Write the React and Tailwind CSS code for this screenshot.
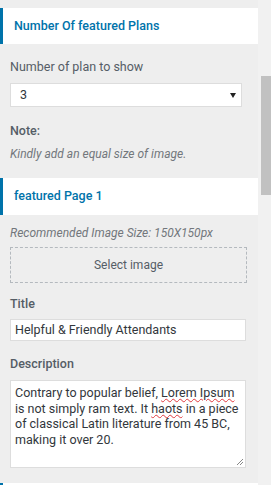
export default function App() {
  // spell-check style underline for flagged words
  const typo = "underline decoration-wavy decoration-[#e0393e] decoration-1 underline-offset-1";

  return (
    <div className="flex h-[485px] w-[271px] overflow-hidden bg-[#eeeeee] font-['Roboto','Liberation_Sans',sans-serif]">
      <div className="flex w-[258px] shrink-0 flex-col pt-2">
        {/* Section header */}
        <div className="flex h-[36px] shrink-0 items-center border-l-[3px] border-[#0073aa] bg-white pl-[11px] text-[12.5px] font-medium text-[#0073aa]">
          Number Of featured Plans
        </div>

        <div className="flex flex-col px-[10px]">
          <div className="mt-[14px] text-[12.5px] leading-[18px] text-[#555d66]">Number of plan to show</div>
          <div className="mt-[7px] flex h-[24px] w-[232px] items-center justify-between border border-[#dddddd] bg-white pl-[9px] pr-[5px] text-[12.5px] text-[#32373c]">
            <span>3</span>
            <svg width="6" height="5" viewBox="0 0 6 5">
              <path d="M0 0 H6 L3 5 Z" fill="#222" />
            </svg>
          </div>

          <div className="mt-[15px] text-[12.5px] font-medium leading-[18px] text-[#555d66]">Note:</div>
          <div className="mt-[6px] text-[12px] italic leading-[16px] text-[#72777c]">Kindly add an equal size of image.</div>
        </div>

        <div className="mt-[16px] flex h-[37px] shrink-0 items-center border-l-[3px] border-[#0073aa] bg-white pl-[11px] text-[12.5px] font-medium text-[#0073aa]">
          featured Page 1
        </div>

        <div className="flex flex-col px-[10px]">
          <div className="mt-[10px] text-[12px] italic leading-[16px] text-[#72777c]">Recommended Image Size: 150X150px</div>
          <div className="mt-[6px] flex h-[36px] w-[237px] items-center justify-center border border-dashed border-[#b4b9be] text-[12px] text-[#555d66]">
            Select image
          </div>

          <div className="mt-[12px] text-[12.5px] font-medium leading-[18px] text-[#555d66]">Title</div>
          <div className="mt-[6px] flex h-[22px] w-[236px] items-center border border-[#dddddd] bg-white pl-[4px] text-[12.5px] text-[#32373c]">
            Helpful &amp; Friendly Attendants
          </div>

          <div className="mt-[14px] text-[12.5px] font-medium leading-[18px] text-[#555d66]">Description</div>
          <div className="relative mt-[7px] h-[88px] w-[236px] shrink-0 border border-[#dddddd] bg-white pl-[4px] pr-[6px] pt-[4px] text-[12.5px] leading-[15.5px] text-[#32373c]">
            Contrary to popular belief, <span className={typo}>Lorem Ipsum</span> is not simply ram text. It{" "}
            <span className={typo}>haots</span> in a piece of classical Latin literature from 45 BC, making it over 20.
            <svg className="absolute bottom-[2px] right-[2px]" width="7" height="7" viewBox="0 0 7 7">
              <path d="M7 1 L1 7 M7 4 L4 7" stroke="#888" strokeWidth="1" />
            </svg>
          </div>
        </div>

        {/* next section header, cut off by the viewport */}
        <div className="mt-[15px] h-[36px] shrink-0 border-l-[3px] border-[#0073aa] bg-white" />
      </div>

      {/* scrollbar */}
      <div className="flex w-[13px] shrink-0 flex-col items-end bg-[#f1f1f1]">
        <div className="mt-[76px] h-[119px] w-[10px] bg-[#c1c1c1]" />
      </div>
    </div>
  );
}
